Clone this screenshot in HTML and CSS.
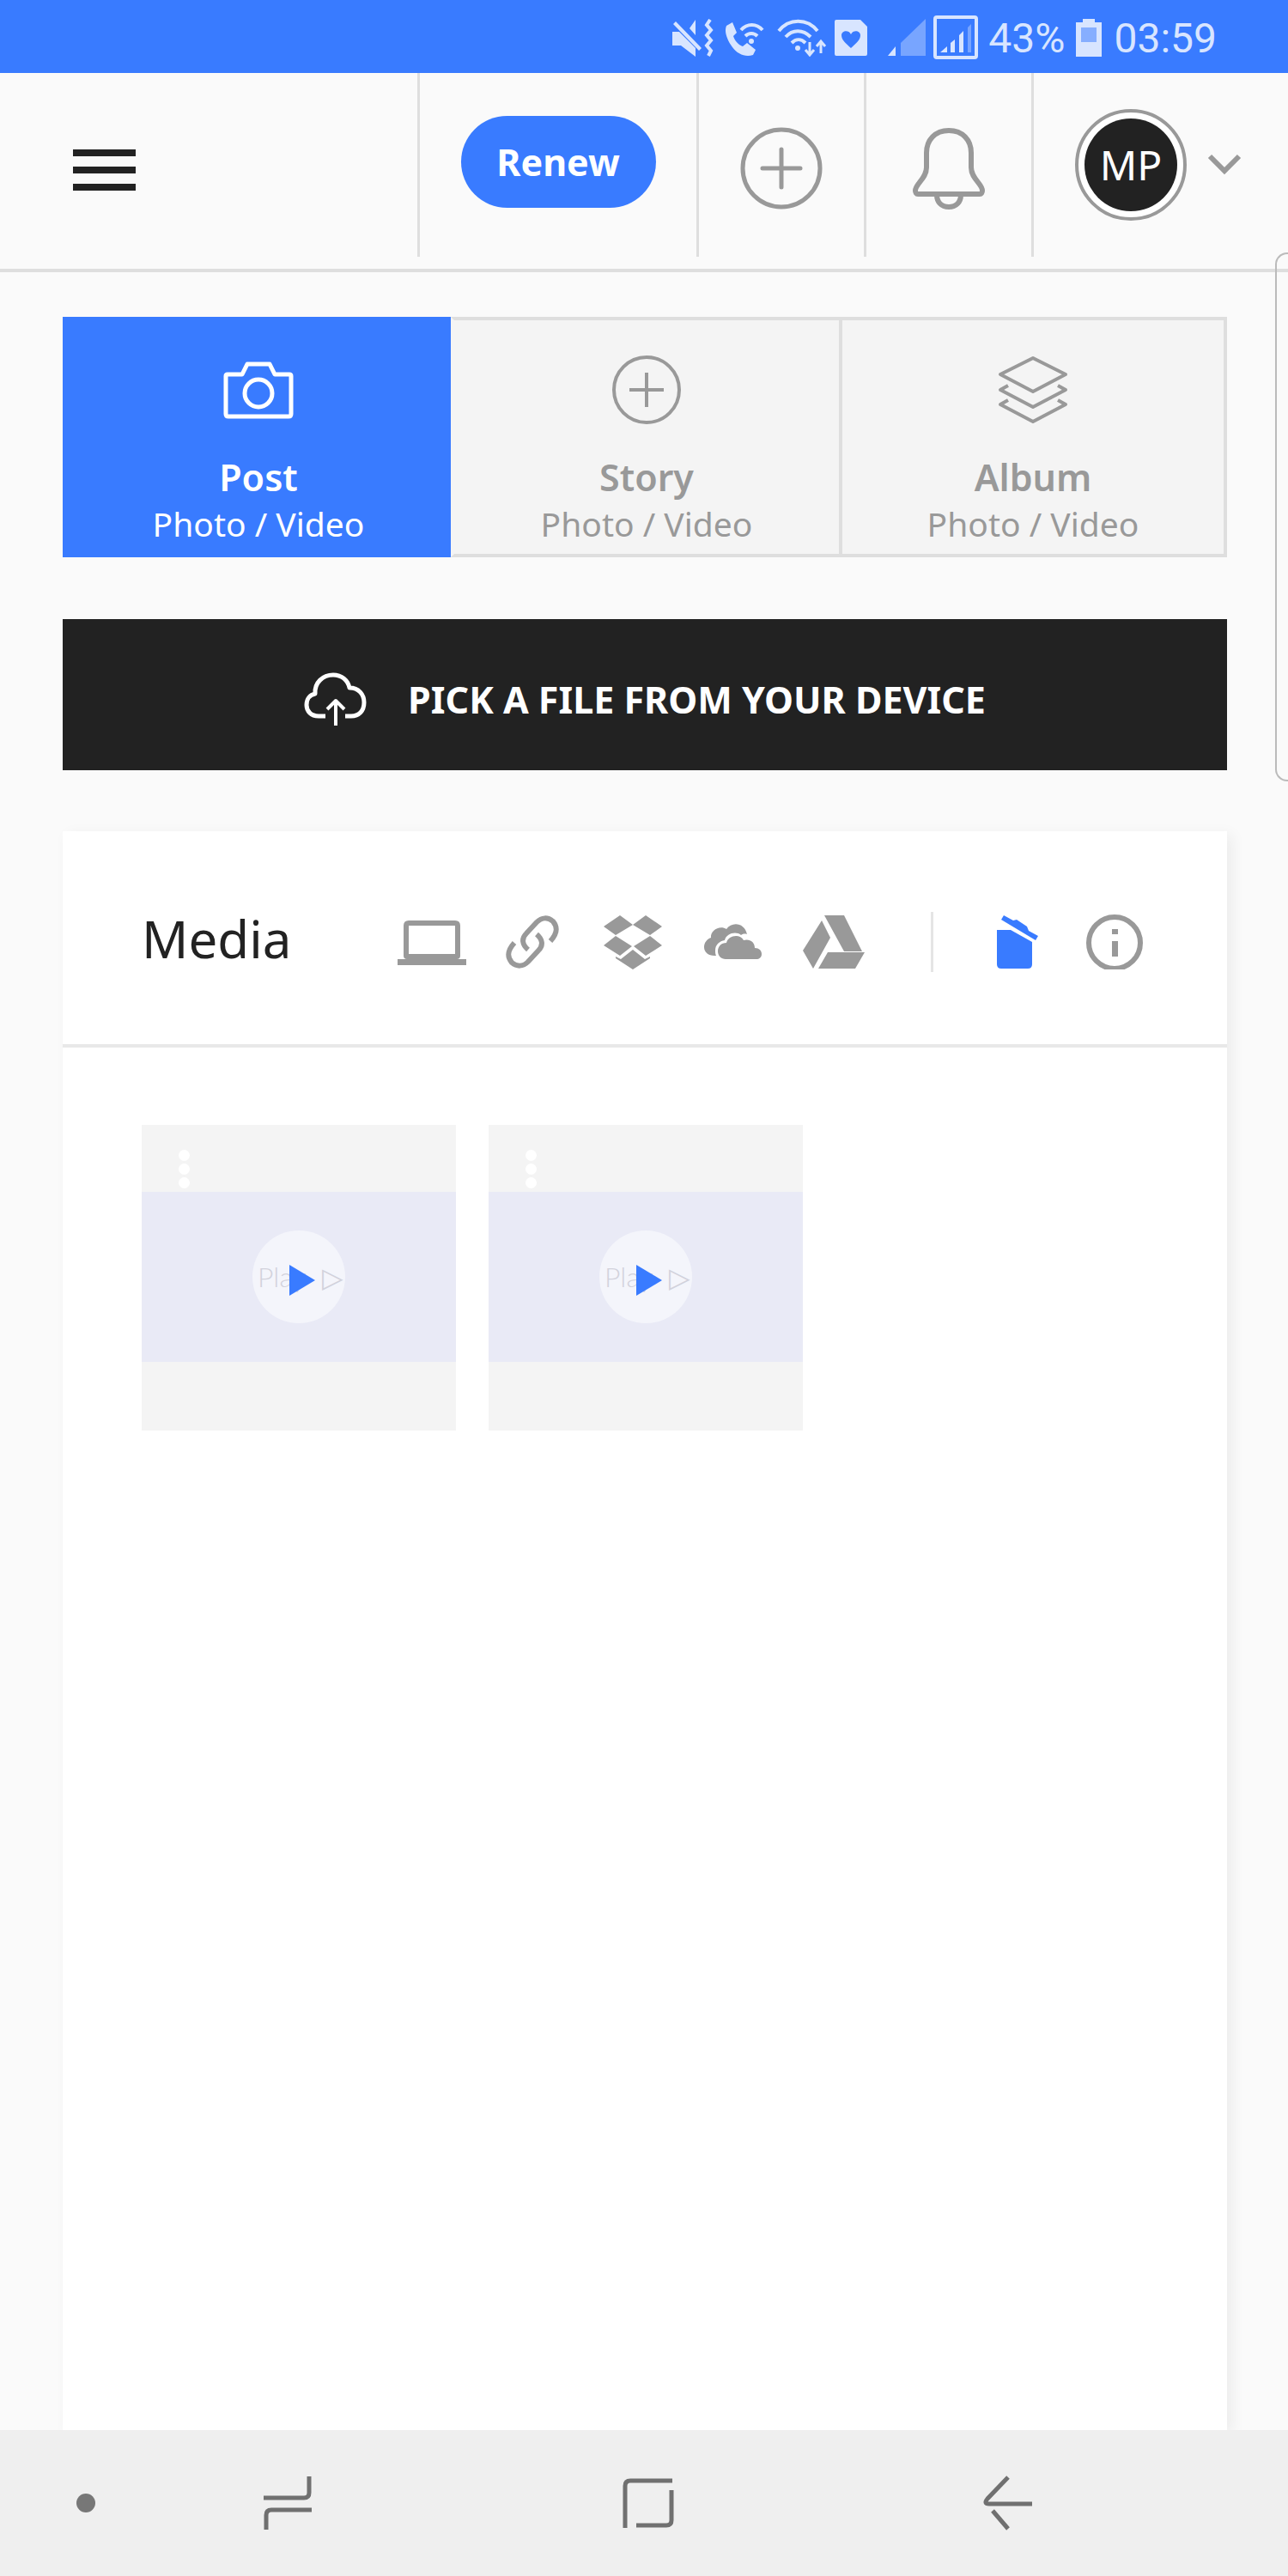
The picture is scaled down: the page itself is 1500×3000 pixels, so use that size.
FILE: index.html
```html
<!DOCTYPE html>
<html lang="en">
<head>
    <meta charset="UTF-8">
    <meta name="viewport" content="width=device-width, initial-scale=1.0">
    <title>Media</title>
    <link rel="stylesheet" href="styles.css">
</head>
<body>
    <div class="status-bar">
        <svg width="48" height="44" viewBox="0 0 48 44" fill="currentColor">
            <path d="M0 15h8L27 34v10L10 31H0zM4 3l30 31-3 3L1 6zM20 11l7-10v18z"/>
            <path d="M44 1l-4 6 5 6-5 6 5 6-5 6 5 6-3 6" fill="none" stroke="currentColor" stroke-width="4"/>
        </svg>
        <svg class="phone" width="48" height="44" viewBox="0 0 48 44" fill="currentColor">
            <path d="M2 8l7-4 5 12-4 4c2 6 6 10 11 12l5-4 10 8-3 6c-9 3-18-1-24-9S-1 15 2 8z"/>
            <path d="M19 13c7-8 18-8 25 0M24 20c4-4 10-4 14 0" fill="none" stroke="currentColor" stroke-width="4"/>
            <circle cx="31" cy="26" r="3"/>
        </svg>
        <svg class="wifi" width="58" height="44" viewBox="0 0 58 44" fill="currentColor">
            <path d="M2 14C14-1 35-1 47 14M10 21c8-9 20-9 29 0M17 28c5-5 11-5 16 0" fill="none" stroke="currentColor" stroke-width="4"/>
            <circle cx="24" cy="34" r="3"/>
            <path d="M38 27v14M33 36l5 6 5-6M51 40V26M46 32l5-6 5 6" fill="none" stroke="currentColor" stroke-width="3"/>
        </svg>
        <svg class="sim" width="38" height="44" viewBox="0 0 38 44" fill="currentColor">
            <path fill-rule="evenodd" d="M2 1h28l8 8v32q0 2-2 2H2q-2 0-2-2V3q0-2 2-2zM19 34c6-6 11-9 11-15 0-5-8-7-11-1-3-6-11-4-11 1 0 6 5 9 11 15z"/>
        </svg>
        <svg class="signal" width="44" height="44" viewBox="0 0 44 44" fill="currentColor">
            <path d="M0 43l9-11v11z"/>
            <path d="M15 43V28L44 0v43z" opacity=".4"/>
        </svg>
        <svg class="signal-box" width="52" height="52" viewBox="0 0 52 52" fill="currentColor">
            <rect x="2" y="2" width="48" height="47" rx="2" fill="none" stroke="currentColor" stroke-width="4"/>
            <path d="M8 43l8-7v7zM20 32l5-4v15h-5zM30 23l5-5v25h-5z"/>
            <path d="M40 14l4-4v33h-4z" opacity=".4"/>
        </svg>
        <span class="battery-level">43%</span>
        <svg class="battery" width="30" height="44" viewBox="0 0 30 44" fill="currentColor">
            <path d="M8 4V0h14v4h8v40H0V4z"/>
            <path d="M6 10h18v17H6z" fill="#86aeff"/>
        </svg>
        <span>03:59</span>
    </div>

    <header class="header">
        <div class="header-menu">
            <button class="icon-button" aria-label="Menu">
                <svg width="73" height="48" viewBox="0 0 73 48" fill="#222">
                    <path d="M0 0h73v8H0zM0 20h73v8H0zM0 40h73v8H0z"/>
                </svg>
            </button>
        </div>
        <div class="header-cell header-renew">
            <button class="renew">Renew</button>
        </div>
        <div class="header-cell header-icon">
            <button class="icon-button" aria-label="Add">
                <svg width="98" height="98" viewBox="0 0 98 98" fill="none" stroke="#999" stroke-width="5" stroke-linecap="round">
                    <circle cx="49" cy="49" r="45"/>
                    <path d="M49 27v44M27 49h44"/>
                </svg>
            </button>
        </div>
        <div class="header-cell header-icon">
            <button class="icon-button" aria-label="Notifications">
                <svg width="98" height="98" viewBox="0 0 98 98" fill="none" stroke="#999" stroke-width="6" stroke-linejoin="round">
                    <path d="M49 5C33 5 23 16 23 31v17c0 13-13 19-13 27 0 2 1 4 3 4h72c2 0 3-2 3-4 0-8-13-14-13-27V31C75 16 65 5 49 5z"/>
                    <path d="M35 80c0 8 5 14 14 14s14-6 14-14"/>
                </svg>
            </button>
        </div>
        <div class="header-cell header-account">
            <button class="account" aria-label="Account">
                <span class="avatar"><span class="initials">MP</span></span>
                <svg width="40" height="26" viewBox="0 0 40 26" fill="none" stroke="#999" stroke-width="6">
                    <path d="M3 3l17 17L37 3"/>
                </svg>
            </button>
        </div>
    </header>

    <main class="content">
        <div class="tabs">
            <button class="tab active">
                <svg width="82" height="82" viewBox="0 0 82 82" fill="none" stroke="currentColor" stroke-width="5" stroke-linejoin="round">
                    <path d="M5 23h17l6-12h26l6 12h17q2 0 2 2v44q0 3-3 3H6q-3 0-3-3V25q0-2 2-2z"/>
                    <circle cx="41" cy="45" r="16"/>
                </svg>
                <span class="tab-title">Post</span>
                <span class="tab-text">Photo / Video</span>
            </button>
            <button class="tab">
                <svg width="82" height="82" viewBox="0 0 82 82" fill="none" stroke="currentColor" stroke-width="4">
                    <circle cx="41" cy="41" r="38"/>
                    <path d="M41 21v40M21 41h40"/>
                </svg>
                <span class="tab-title">Story</span>
                <span class="tab-text">Photo / Video</span>
            </button>
            <button class="tab">
                <svg width="82" height="82" viewBox="0 0 82 82" fill="none" stroke="currentColor" stroke-width="4" stroke-linejoin="round">
                    <path d="M41 4l38 19-38 20L3 23z"/>
                    <path d="M12 36l-9 5 38 20 38-20-9-5M12 53l-9 5 38 20 38-20-9-5"/>
                </svg>
                <span class="tab-title">Album</span>
                <span class="tab-text">Photo / Video</span>
            </button>
        </div>

        <button class="upload">
            <svg width="73" height="63" viewBox="0 0 73 63" fill="none" stroke="#fff" stroke-width="5" stroke-linejoin="round">
                <path d="M25 51H17C8 51 3 45 3 38c0-7 4-12 10-13C12 12 22 3 34 3c10 0 17 6 19 15 11 0 17 8 17 17 0 10-6 16-15 16h-7"/>
                <path d="M37 62V33M27 43l10-10 10 10" stroke-width="4"/>
            </svg>
            <span>PICK A FILE FROM YOUR DEVICE</span>
        </button>

        <section class="card">
            <div class="card-header">
                <h1>Media</h1>
                <div class="tools">
                    <button class="tool" aria-label="This device">
                        <svg width="80" height="64" viewBox="0 0 80 64" fill="#999">
                            <path fill-rule="evenodd" d="M13 7h54q6 0 6 6v35q0 4-4 4h11v7H0v-7h11q-4 0-4-4V13q0-6 6-6zM13 13v33h54V13z"/>
                        </svg>
                    </button>
                    <button class="tool" aria-label="Link">
                        <svg width="64" height="64" viewBox="0 0 64 64" fill="none" stroke="#999" stroke-width="6">
                            <path d="M27 41c-7-6-8-13-2-19L37 9c6-6 13-6 19-1 5 6 6 13-3 23"/>
                            <path d="M37 23c7 6 8 13 2 19L27 55c-6 6-13 6-19 1-5-6-6-13 3-23"/>
                        </svg>
                    </button>
                    <button class="tool" aria-label="Dropbox">
                        <svg width="70" height="64" viewBox="0 0 70 64" fill="#999">
                            <path d="M20 1l15 11-20 12L1 14zM50 1L35 12l20 12 14-10zM15 25l19 12-14 11L1 36zM55 25L36 37l14 11 19-12zM35 41l14 11 6-3v2L35 64 15 51v-2l6 3z"/>
                        </svg>
                    </button>
                    <button class="tool" aria-label="OneDrive">
                        <svg width="68" height="64" viewBox="0 0 68 64" fill="#999">
                            <path d="M12 48C5 48 0 44 0 38c0-5 3-9 8-11-1-8 10-15 18-10 6-9 21-8 24 6-3-1-6 0-7 1-6-5-17-2-19 6-6 1-11 5-11 12 0 2 0 4 1 6z"/>
                            <path d="M25 52c-5 0-9-4-9-9 0-6 4-10 10-10 2-9 16-11 20-3 7-2 13 2 13 9 5 0 8 3 8 7s-3 6-6 6z"/>
                        </svg>
                    </button>
                    <button class="tool" aria-label="Google Drive">
                        <svg width="72" height="64" viewBox="0 0 72 64" fill="#999">
                            <path d="M25 1h23l21 42H48zM22 7l10 20-20 36L0 42zM29 44h43L61 63H18z"/>
                        </svg>
                    </button>
                    <span class="divider"></span>
                    <button class="tool" aria-label="Delete">
                        <svg width="60" height="64" viewBox="-10 0 60 64" fill="#397bff">
                            <path d="M0 18h16l25 14v26q0 5-5 5H5q-5 0-5-5z"/>
                            <path d="M8 1l11 6 4-1 12 8 2 5 11 6-3 5L5 6z"/>
                        </svg>
                    </button>
                    <button class="tool" aria-label="Info">
                        <svg width="66" height="64" viewBox="0 0 66 64">
                            <circle cx="33" cy="33" r="30" fill="none" stroke="#999" stroke-width="6"/>
                            <path d="M30 17h7v6h-7zM30 31h7v18h-7z" fill="#999"/>
                        </svg>
                    </button>
                </div>
            </div>

            <div class="media-list">
                <article class="media-item">
                    <button class="more" aria-label="Options"><i></i><i></i><i></i></button>
                    <div class="preview">
                        <button class="play">
                            <span class="play-label">Play <span>▷</span></span>
                            <svg class="play-icon" width="30" height="36" viewBox="0 0 30 36" fill="#397bff">
                                <path d="M0 0l30 18L0 36z"/>
                            </svg>
                        </button>
                    </div>
                </article>
                <article class="media-item">
                    <button class="more" aria-label="Options"><i></i><i></i><i></i></button>
                    <div class="preview">
                        <button class="play">
                            <span class="play-label">Play <span>▷</span></span>
                            <svg class="play-icon" width="30" height="36" viewBox="0 0 30 36" fill="#397bff">
                                <path d="M0 0l30 18L0 36z"/>
                            </svg>
                        </button>
                    </div>
                </article>
            </div>
        </section>
    </main>

    <div class="edge-handle"></div>

    <nav class="system-nav">
        <span class="nav-dot"></span>
        <div class="nav-buttons">
            <button class="icon-button" aria-label="Recents">
                <svg width="60" height="64" viewBox="0 0 60 64" fill="none" stroke="#707070" stroke-width="5">
                    <path d="M55 1v19q0 6-6 6H2M5 63V46q0-6 6-6h47"/>
                </svg>
            </button>
            <button class="icon-button" aria-label="Home">
                <svg width="60" height="64" viewBox="0 0 60 64" fill="none" stroke="#707070" stroke-width="5">
                    <path d="M3 61V12q0-6 6-6h49M57 17v35q0 6-6 6H16"/>
                </svg>
            </button>
            <button class="icon-button" aria-label="Back">
                <svg width="60" height="64" viewBox="0 0 60 64" fill="none" stroke="#707070" stroke-width="5">
                    <path d="M30 2L6 27q-5 6 2 6h50M12 41l18 21"/>
                </svg>
            </button>
        </div>
    </nav>
</body>
</html>
```
FILE: styles.css
```css
* {
    box-sizing: border-box;
}

body {
    display: flex;
    flex-direction: column;
    position: relative;
    min-height: 100vh;
    margin: 0;
    font-family: "Noto Sans", "Open Sans", sans-serif;
    background-color: #fafafa;
    color: #222;
}

button {
    margin: 0;
    padding: 0;
    border: none;
    background: none;
    color: inherit;
    font-family: inherit;
    cursor: pointer;
}

svg {
    display: block;
    flex-shrink: 0;
}

/* Status bar */
.status-bar {
    display: flex;
    align-items: center;
    justify-content: flex-end;
    height: 85px;
    padding: 3px 83px 0 0;
    background-color: #397bff;
    color: #d8e5ff;
    font-family: Roboto, sans-serif;
    font-size: 48px;
}

.phone,
.wifi,
.battery {
    margin-left: 13px;
}

.sim,
.signal-box {
    margin-left: 9px;
}

.signal {
    margin-left: 24px;
}

.battery-level {
    margin-left: 12px;
}

.battery {
    margin-right: 14px;
}

/* Header */
.header {
    display: flex;
    padding-bottom: 14px;
    border-bottom: 4px solid #dedede;
}

.header-menu {
    display: flex;
    flex: 1;
    align-items: center;
    padding: 12px 0 0 85px;
}

.header-cell {
    display: flex;
    align-items: center;
    justify-content: center;
    height: 214px;
    border-left: 3px solid #dedede;
}

.header-renew {
    width: 325px;
    padding-bottom: 8px;
}

.header-icon {
    width: 195px;
    padding-top: 8px;
}

.header-account {
    width: 299px;
    justify-content: flex-start;
    padding-left: 48px;
}

.renew {
    width: 227px;
    height: 107px;
    border-radius: 54px;
    background-color: #397bff;
    color: #fff;
    font-size: 43px;
    font-weight: bold;
}

.account {
    display: flex;
    align-items: center;
    gap: 24px;
}

.avatar {
    padding: 7px;
    border: 4px solid #999;
    border-radius: 50%;
    background-color: #fff;
}

.initials {
    display: block;
    width: 108px;
    height: 108px;
    border-radius: 50%;
    background-color: #222;
    color: #fff;
    font-size: 48px;
    line-height: 108px;
    text-align: center;
}

/* Content */
.content {
    display: flex;
    flex: 1;
    flex-direction: column;
    padding: 52px 71px 0 73px;
}

.tabs {
    display: grid;
    grid-template-columns: repeat(3, 1fr);
    margin-bottom: 72px;
}

.tab {
    display: flex;
    flex-direction: column;
    align-items: center;
    height: 280px;
    padding-top: 40px;
    border: 4px solid #dedede;
    border-right: none;
    background-color: #f4f4f4;
    color: #999;
}

.tab:last-child {
    border-right: 4px solid #dedede;
}

.tab.active {
    border-color: #397bff;
    background-color: #397bff;
    color: #fff;
}

.tab.active + .tab {
    border-left-color: #f4f4f4;
}

.tab-title {
    margin-top: 34px;
    font-size: 43px;
    font-weight: 600;
    line-height: 54px;
}

.tab-text {
    font-size: 39px;
    line-height: 54px;
}

.upload {
    display: flex;
    align-items: center;
    justify-content: center;
    gap: 48px;
    height: 176px;
    margin-bottom: 71px;
    padding-top: 10px;
    background-color: #222;
    color: #fff;
    font-size: 43px;
    font-weight: bold;
}

/* Media card */
.card {
    flex: 1;
    background-color: #fff;
    box-shadow: 6px 4px 16px rgba(0, 0, 0, 0.06);
}

.card-header {
    display: flex;
    align-items: center;
    justify-content: space-between;
    height: 252px;
    padding: 2px 91px 0 92px;
    border-bottom: 4px solid #e8e8e8;
}

.card-header h1 {
    margin: 0;
    font-size: 60px;
    font-weight: normal;
}

.tools {
    display: flex;
    align-items: center;
    gap: 37px;
    padding-top: 8px;
}

.tool {
    display: flex;
    justify-content: center;
    width: 80px;
}

.divider {
    width: 3px;
    height: 70px;
    margin: 0 17px 0 36px;
    background-color: #e5e5e5;
}

.media-list {
    display: flex;
    flex-wrap: wrap;
    gap: 38px;
    padding: 90px 92px;
}

.media-item {
    width: 366px;
    height: 356px;
    background-color: #f4f4f4;
}

.more {
    display: flex;
    flex-direction: column;
    gap: 3px;
    height: 78px;
    padding: 29px 43px 0;
}

.more i {
    width: 13px;
    height: 13px;
    border-radius: 50%;
    background-color: #fff;
}

.preview {
    display: flex;
    align-items: center;
    justify-content: center;
    height: 198px;
    background-color: #e9eaf6;
}

.play {
    position: relative;
    width: 108px;
    height: 108px;
    border-radius: 50%;
    background-color: #f4f5fb;
    color: #d2d2dc;
    font-family: Lato, "DejaVu Sans", sans-serif;
    font-size: 32px;
    font-weight: 300;
    white-space: nowrap;
}

.play-label {
    display: flex;
    justify-content: space-between;
    padding: 0 2px 0 6px;
}

.play-icon {
    position: absolute;
    top: 40px;
    left: 43px;
}

/* Handle of the panel that slides in from the right edge */
.edge-handle {
    position: absolute;
    top: 294px;
    right: 0;
    width: 15px;
    height: 616px;
    border: 2px solid #bbb;
    border-right: none;
    border-radius: 14px 0 0 14px;
}

/* System navigation */
.system-nav {
    display: flex;
    align-items: center;
    gap: 194px;
    height: 170px;
    padding: 0 296px 0 89px;
    background-color: #efefef;
}

.nav-dot {
    width: 22px;
    height: 22px;
    border-radius: 50%;
    background-color: #777;
}

.nav-buttons {
    display: flex;
    flex: 1;
    justify-content: space-between;
}
```
